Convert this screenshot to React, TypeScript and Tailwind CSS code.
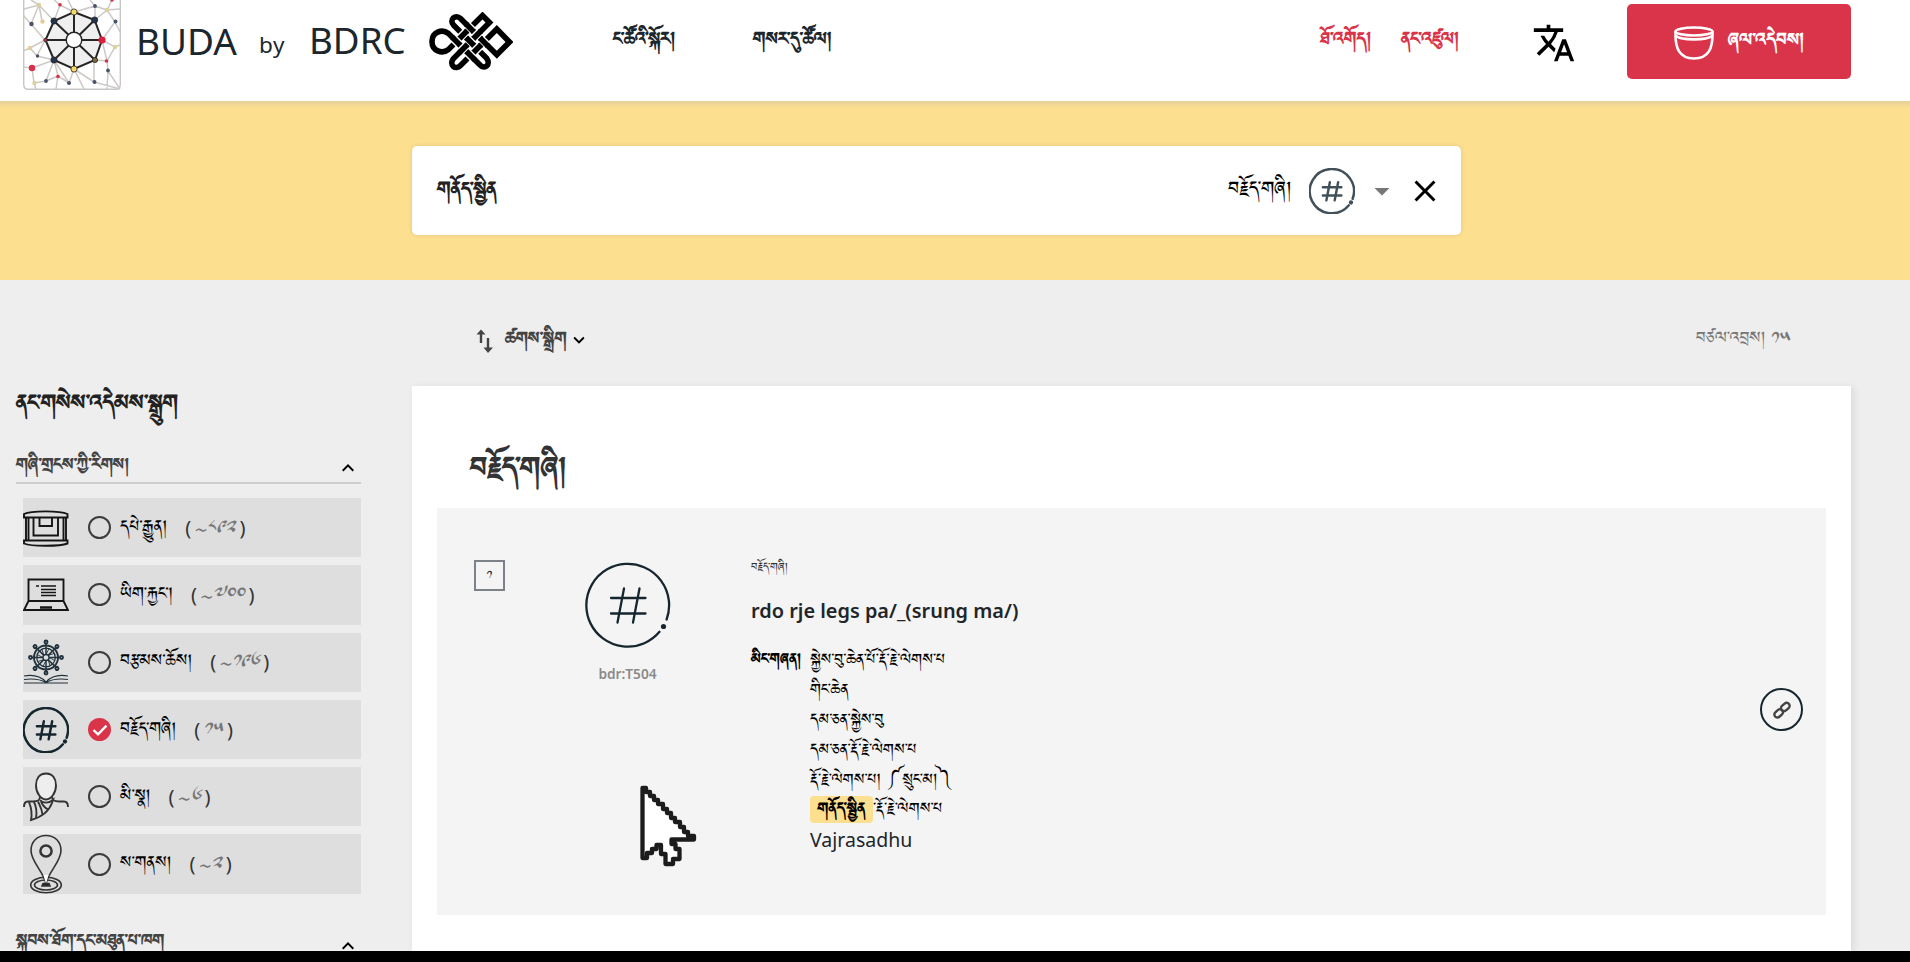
import React from "react";
import { MdTranslate, MdClose, MdExpandMore, MdExpandLess, MdArrowDropDown } from "react-icons/md";

const TIB = "[font-family:Jomolhari,serif] whitespace-nowrap";

function HashIcon({ className, stroke = 2 }: { className: string; stroke?: number }) {
  return (
    <svg viewBox="0 0 86 86" className={className} fill="none" stroke="currentColor" strokeLinecap="round">
      <path d="M81.6 57.5A41.4 41.4 0 1 0 74.5 69.8" strokeWidth={stroke} />
      <path d="M39 26.5L32.5 60.5M54.500 26.5L48 60.5M26 36H60.500M26 51.5H60.500" strokeWidth={stroke} />
      <circle cx="78.5" cy="64.5" r={stroke > 3 ? 4 : 2.6} fill="currentColor" stroke="none" />
    </svg>
  );
}

function Logo() {
  const rim = "74,12 94.6,20 102,40 95,60 74,69 54,60 45.5,40 54,21";
  return (
    <svg viewBox="23 0 98 91" className="h-[91px] w-[98px] shrink-0" fill="none">
      <path d="M23.7 -4V84Q23.7 89.3 28 89.3H116Q120.3 89.3 120.3 84V-4" stroke="#c9c6c6" strokeWidth="1.4" />
      <g stroke="#cdc9c7" strokeWidth="1.5">
        <path d="M31 0L39 5L54 21M39 5L42 21M39 5L24 9M23 15L31 24L39 5M54 0L60 5L74 12L68 0M60 5L54 21M74 12L95 6L90 0M95 6V20L107 10L120 9M107 10L112 0M95 6L107 10L115 22L102 40M107 10L95 20M115 22L120 32M31 24L45 40L30 48L23 51M30 48L37 56L54 60M45 40L37 56M102 40L115 47L120 45M102 40L107 61L95 60M115 47L107 61L108 71L120 89M32 68L54 60L46 81L34 83L36 89M32 68L23 67M32 68L34 83M54 60L58 76L69 83L74 69L84 89M46 81L58 76L56 89M74 69L94 82V60M94 82L120 89M108 71L107 89M54 60L69 83" />
      </g>
      <g>
        <g fill="#dfcf9b"><circle cx="39" cy="5" r="2.2" /><circle cx="42.5" cy="21.5" r="2.2" /><circle cx="107" cy="10" r="2.2" /><circle cx="30" cy="48" r="2.2" /><circle cx="115" cy="47" r="2.2" /><circle cx="34.5" cy="83" r="2.2" /></g>
        <g fill="#47526b"><circle cx="31.5" cy="24" r="2.2" /><circle cx="95" cy="6" r="1.9" /><circle cx="115.5" cy="21.5" r="1.9" /><circle cx="37.5" cy="56" r="1.7" /><circle cx="46" cy="81" r="1.9" /><circle cx="69" cy="83" r="2" /><circle cx="94.5" cy="82" r="2" /><circle cx="108" cy="70.5" r="1.9" /></g>
        <g fill="#d7304b"><circle cx="60" cy="4.7" r="1.8" /><circle cx="112" cy="0" r="1.8" /><circle cx="32" cy="68" r="3.2" /><circle cx="58" cy="76.5" r="1.8" /><circle cx="106.5" cy="61" r="1.8" /></g>
      </g>
      <polygon points={rim} fill="#efefef" stroke="#272424" strokeWidth="2" />
      <path d="M74 12V69M45.5 40H102M54 21L95 60M94.6 20L54 60" stroke="#272424" strokeWidth="2" />
      <circle cx="74" cy="40" r="7.8" fill="#fff" stroke="#272424" strokeWidth="1.4" />
      <g stroke="#272424" strokeWidth=".8">
        <circle cx="74" cy="12" r="3.1" fill="#f5da62" /><circle cx="74" cy="69" r="3.1" fill="#f5da62" />
        <circle cx="94.6" cy="20" r="3.1" fill="#23344f" /><circle cx="54" cy="21" r="3.1" fill="#23344f" />
        <circle cx="54" cy="60" r="3.1" fill="#23344f" /><circle cx="95" cy="60" r="2.6" fill="#7a6a40" />
        <circle cx="45.5" cy="40" r="1.7" fill="#d7304b" />
      </g>
      <circle cx="102" cy="40" r="3.6" fill="#dc1f3e" />
    </svg>
  );
}

/* One closed strand; each lattice crossing redraws the strand that passes on top. */
const falling = [25, 11.5, -2];
const rising = [57, 71, 85];
function Knot() {
  return (
    <svg viewBox="0 0 84 59" className="h-[59px] w-[84px] shrink-0" fill="none" stroke="#000" strokeWidth="5.600">
      <path d="M27.500 29.500L19.500 21.500C13 16.500 3 20 3 29.500C3 39 13 42.500 19.500 37.500L53.500 3.500L60.500 10.500L24.500 46.500C19.500 53 26.500 58.500 31.500 53.500L67.800 17L80.500 30L67.800 42.800L31.500 6.500C26.500 1.500 19.500 8 24.700 13.300L57.700 46.300C62 52.500 56 58 51 53L27.500 29.500" />
      {falling.map((c, i) =>
        rising.map((s, j) => {
          const x = (s + c) / 2;
          const y = (s - c) / 2;
          const d = (i + j) % 2 === 0 ? 1 : -1;
          return (
            <g key={`${i}${j}`}>
              <path d={`M${x - 3} ${y - 3 * d}L${x + 3} ${y + 3 * d}`} stroke="#fff" strokeWidth="8.400" />
              <path d={`M${x - 4.2} ${y - 4.2 * d}L${x + 4.2} ${y + 4.2 * d}`} />
            </g>
          );
        }),
      )}
    </svg>
  );
}

function BowlIcon() {
  return (
    <svg viewBox="0 0 40 34" className="mt-[3px] h-[34px] w-[40px]" fill="none" stroke="#fff" strokeWidth="2.600">
      <ellipse cx="20" cy="5.5" rx="18.500" ry="4" />
      <path d="M1.500 5.500C1 22 5 32.500 20 32.500S39 22 38.500 5.500M2 10C7 14.500 33 14.500 38 10" />
    </svg>
  );
}

const svgBase = "h-[60px] w-[46px]";

function PechaIcon() {
  return (
    <svg viewBox="0 0 46 60" className={svgBase} fill="none" stroke="#151515" strokeWidth="1.900">
      <path d="M1 16C8 12.500 37 12.500 44.500 16V19.500H1ZM1 42.500H44.500V45.500C37 48.500 8 48.500 1 45.500ZM3 20V42M5.500 20V42M40.500 20V42M43 20V42M10.500 20V37.500H35V20M16.500 20V28H29V20" />
    </svg>
  );
}
function LaptopIcon() {
  return (
    <svg viewBox="0 0 46 60" className={svgBase} fill="none" stroke="#151515" strokeWidth="1.900">
      <path d="M5.500 36V14.500H40.500V36ZM5.500 36L1 45H45L40.500 36" />
      <path d="M17 42.500H29" strokeWidth="2.500" />
      <path d="M13 21H16M18 21H33M18 24.500H33M18 27.500H33M18 30.500H33" strokeWidth="1.400" />
    </svg>
  );
}
function WheelIcon() {
  const spokes = [0, 45, 90, 135, 180, 225, 270, 315];
  return (
    <svg viewBox="0 0 46 60" className={svgBase} fill="none" stroke="#22323c" strokeWidth="1.300">
      <circle cx="23" cy="25.500" r="12" strokeWidth="1.900" /><circle cx="23" cy="25.500" r="9.300" /><circle cx="23" cy="25.500" r="3" />
      {spokes.map((a) => (
        <g key={a} transform={`rotate(${a} 23 25.5)`}>
          <path d="M23 22.500V11" strokeWidth="1.500" /><circle cx="23" cy="10" r="1.500" strokeWidth="1.900" />
          <path d="M23 22.500L26 16.700" strokeWidth=".9" />
        </g>
      ))}
      <path d="M1 44C9 42.500 17 43.500 23 50C29 43.500 37 42.500 45 44M1 47.500C9 46.500 16 46.500 23 50.500C30 46.500 37 46.500 45 47.500M1 51H45" strokeWidth="1.100" />
    </svg>
  );
}
function PersonIcon() {
  return (
    <svg viewBox="0 0 46 60" className={svgBase} fill="none" stroke="#333" strokeWidth="1.900">
      <path d="M23 6.500C16 6.500 13 12 13 18.500C13 26 18 32.500 23 32.500S33 26 33 18.500C33 12 30 6.500 23 6.500Z" fill="#eee" />
      <path d="M17 29.500C17 34 14 34.500 10 34.500H5C2 34.500 1 36 1 40M29 29.500C29 34 32 34.500 36 34.500H41C44 34.500 45 36 45 40" />
      <path d="M17 33C20 36.500 26 36.500 30 33L29 36C26 44 19 50 8 53C9.500 46 8 40 6 35M11 35C14 41 14 45 13 51M15 34.500C17 39 19 42 19.500 47.500M18 34.500C20 39 22 41 25 42.500" />
    </svg>
  );
}
function PlaceIcon() {
  return (
    <svg viewBox="0 0 46 60" className={svgBase} fill="none" stroke="#333" strokeWidth="1.600">
      <ellipse cx="23" cy="51" rx="15.300" ry="7.800" /><ellipse cx="23" cy="51" rx="11.500" ry="5" />
      <path d="M23 50C21 38 8 28 8 16.500C8 8 14 1.500 23 1.500S38 8 38 16.500C38 28 25 38 23 50Z" fill="#dedede" />
      <path d="M23 50L20.500 41H25.500Z" fill="#fff" stroke="none" />
      <circle cx="23" cy="17" r="5.600" strokeWidth="2.500" />
      <path d="M20 49.500H26L27 52H19Z" fill="#222" />
    </svg>
  );
}

function Facet({ icon, label, count, approx = true, checked = false }: { icon: React.ReactNode; label: string; count: string; approx?: boolean; checked?: boolean }) {
  return (
    <li className="flex h-[59.3px] items-center bg-[#dedede]">
      <span className="flex w-[65px] shrink-0 items-center">{icon}</span>
      {checked ? (
        <span className="flex size-[23px] items-center justify-center rounded-full bg-[#d93449]">
          <svg viewBox="0 0 16 12" className="h-3 w-4" fill="none" stroke="#fff" strokeWidth="2.400"><path d="M1.500 6L6 10.300L14.500 1.600" /></svg>
        </span>
      ) : (
        <span className="size-[23px] rounded-full border-2 border-[#3c3c3c]" />
      )}
      <span className={`${TIB} ml-[9px] text-[20.9px] leading-[30px] text-black`}>{label}</span>
      <span className="ml-[18px] flex items-center text-[20px] leading-[30px] text-[#333]">
        <span>(</span>
        <span className={`${TIB} ml-[2px] mr-[5px] text-[20.9px] italic text-[#777]`}>{approx ? "~" : ""}{count}</span>
        <span>)</span>
      </span>
    </li>
  );
}

const names = [
  "སྐྱེས་བུ་ཆེན་པོ་རྡོ་རྗེ་ལེགས་པ",
  "གིང་ཆེན",
  "དམ་ཅན་སྐྱེས་བུ",
  "དམ་ཅན་རྡོ་རྗེ་ལེགས་པ",
  "རྡོ་རྗེ་ལེགས་པ། ༼སྲུང་མ།༽",
];

export default function App() {
  return (
    <div className="flex h-[962px] w-[1910px] flex-col overflow-hidden bg-[#eee] font-['Noto_Sans',sans-serif] text-[#212529]">
      <header className="flex h-[101px] shrink-0 items-start bg-white pl-[23px] text-[#1c262d]">
        <Logo />
        <div className="flex h-[83px] items-center">
          <span className="-mt-[2px] ml-[15px] w-[123px] text-[37px]">BUDA</span>
          <span className="w-[50px] pt-[7px] text-[22.500px] tracking-wide">by</span>
          <span className="-mt-[2px] w-[120px] text-[36.700px]">BDRC</span>
          <Knot />
        </div>
        <nav className={`${TIB} flex h-[80px] items-center text-[22.400px] leading-[30px]`}>
          <a className="ml-[100px] w-[140px] font-bold">ང་ཚོའི་སྐོར།</a>
          <a className="w-[567px] font-bold">གསར་དུ་ཚོལ།</a>
          <a className="w-[81px] font-bold text-[#d93449]">ཐོ་འགོད།</a>
          <a className="w-[131px] font-bold text-[#d93449]">ནང་འཛུལ།</a>
        </nav>
        <MdTranslate className="mt-[21px] size-[44px] shrink-0 text-black" />
        <button className="ml-[51px] mt-[4px] flex h-[75px] w-[224px] shrink-0 items-center rounded-[5px] bg-[#d93449] pl-[47px] text-white">
          <BowlIcon />
          <span className={`${TIB} -mt-[2px] ml-[14px] text-[22.600px] font-bold leading-[30px]`}>ཞལ་འདེབས།</span>
        </button>
      </header>

      <section className="h-[179px] shrink-0 bg-[#fcdf8f]">
        <div className="h-[7px] bg-linear-to-b from-[#e6d09a] to-[#fcdf8f]" />
        <div className="ml-[412px] mt-[38px] flex h-[89px] w-[1049px] items-center rounded-[5px] bg-white pl-[25px] shadow-[0_0_5px_rgba(0,0,0,0.1)]">
          <span className={`${TIB} -mt-[2px] w-[791px] text-[24.200px] font-bold leading-[30px] text-[#222]`}>གནོད་སྦྱིན</span>
          <span className={`${TIB} -mt-[4px] w-[81px] text-[23.600px] leading-[30px] text-black`}>བརྗོད་གཞི།</span>
          <HashIcon className="size-[46px] shrink-0 text-[#42505a]" stroke={4.6} />
          <MdArrowDropDown className="ml-[9px] size-[36px] shrink-0 text-[#777]" />
          <MdClose className="ml-[7px] size-[36px] shrink-0 text-black" />
        </div>
      </section>

      <main className="flex min-h-0 flex-1">
        <aside className="w-[412px] shrink-0 pl-[16px] pt-[104px]">
          <h2 className={`${TIB} text-[27px] font-bold leading-[40px] text-[#222]`}>ནང་གསེས་འདེམས་སྒྲུག</h2>
          <div className="mt-[15px] flex h-[45px] w-[345px] items-start justify-between border-b-2 border-[#ccc] pr-[1px] pt-[11px]">
            <h3 className={`${TIB} text-[21px] font-bold leading-[30px] text-[#444]`}>གཞི་གྲངས་ཀྱི་རིགས།</h3>
            <MdExpandLess className="mt-[6px] size-[24px] text-black" />
          </div>
          <ul className="ml-[7px] mt-[14px] flex w-[338px] flex-col gap-[8px]">
            <Facet icon={<PechaIcon />} label="དཔེ་རྒྱུན།" count="༨༩༢" />
            <Facet icon={<LaptopIcon />} label="ཡིག་རྐྱང་།" count="༧༠༠" />
            <Facet icon={<WheelIcon />} label="བརྩམས་ཆོས།" count="༡༩༦" />
            <Facet icon={<HashIcon className="size-[46px] text-[#16262f]" stroke={4.6} />} label="བརྗོད་གཞི།" count="༡༥" approx={false} checked />
            <Facet icon={<PersonIcon />} label="མི་སྣ།" count="༦" />
            <Facet icon={<PlaceIcon />} label="ས་གནས།" count="༢" />
          </ul>
          <div className="mt-[30px] flex w-[345px] items-center justify-between pr-[1px]">
            <h3 className={`${TIB} text-[21px] font-bold leading-[30px] text-[#444]`}>སྐབས་ཐོག་དང་མཐུན་པ་ཁག</h3>
            <MdExpandLess className="mt-[10px] size-[24px] text-black" />
          </div>
        </aside>

        <div className="flex w-[1439px] shrink-0 flex-col">
          <div className="flex h-[106px] shrink-0 items-center pl-[64px] pt-[12px]">
            <svg viewBox="0 0 20 26" className="mt-[4px] h-[26px] w-[20px]" fill="#444"><path d="M5 1.500L9.500 6.500H6.200V15H3.800V6.500H.5ZM10.800 10H13.200V19.500H17L12 25L7.500 19.500H10.800Z" /></svg>
            <span className={`${TIB} ml-[9px] text-[21.400px] font-bold leading-[30px] text-[#444]`}>ཚགས་སྒྲིག</span>
            <MdExpandMore className="ml-[1px] mt-[2px] size-[22px] text-black" />
            <span className={`${TIB} -mt-[1px] ml-auto mr-[60px] text-[20.700px] leading-[30px] text-[#777]`}>བཙལ་འབྲས། ༡༥</span>
          </div>
          <div className="flex-1 bg-white px-[25px] pt-[52px] shadow-[3px_1px_8px_rgba(0,0,0,0.08)]">
            <h1 className={`${TIB} h-[70px] pl-[33px] pt-[1px] text-[36px] font-bold leading-[60px] text-[#333]`}>བརྗོད་གཞི།</h1>
            <article className="flex h-[407px] bg-[#f4f4f4]">
              <div className="ml-[37px] mt-[52px] flex size-[31px] items-center justify-center border-2 border-[#7d8289]">
                <span className={`${TIB} -mt-[2px] text-[14px] leading-[20px] text-[#333]`}>༡</span>
              </div>
              <div className="ml-[59px] mt-[54px] flex w-[127px] flex-col items-center">
                <HashIcon className="size-[86px] text-[#16262f]" stroke={2.3} />
                <span className="mt-[16px] text-[13.700px] font-semibold leading-[20px] text-[#8a8a8a]">bdr:T504</span>
              </div>
              <div className="ml-[60px] mt-[44px] flex-1">
                <div className={`${TIB} text-[13.700px] leading-[30px] text-[#333]`}>བརྗོད་གཞི།</div>
                <div className="mt-[14px] text-[19.900px] font-semibold leading-[30px]">rdo rje legs pa/_(srung ma/)</div>
                <div className="mt-[19px] flex text-black">
                  <div className={`${TIB} w-[59px] text-[18.200px] font-bold leading-[30px]`}>མིང་གཞན།</div>
                  <div className={`${TIB} text-[19.400px] leading-[30px]`}>
                    {names.map((n) => <div key={n}>{n}</div>)}
                    <div className="flex items-center">
                      <mark className="-mt-[1px] flex h-[27px] w-[63px] items-center justify-center rounded-[4px] bg-[#fcdf8f] font-bold text-black">གནོད་སྦྱིན</mark>
                      <span className="-mt-[1px]">་རྡོ་རྗེ་ལེགས་པ</span>
                    </div>
                    <div className="mt-[1px] font-['Noto_Sans',sans-serif] text-[19.500px] leading-[30px] text-[#212529]">Vajrasadhu</div>
                  </div>
                </div>
              </div>
              <div className="mr-[23px] mt-[180px] flex size-[43px] items-center justify-center rounded-full border-2 border-[#16262f]">
                <svg viewBox="0 0 20 20" className="size-[20px]" fill="none" stroke="#444" strokeWidth="2.400"><rect x="-4.800" y="-3" width="9.600" height="6" rx="3" transform="translate(6.700 13.300) rotate(-42)" /><rect x="-4.800" y="-3" width="9.600" height="6" rx="3" transform="translate(13.300 7) rotate(-42)" /></svg>
              </div>
            </article>
          </div>
        </div>
      </main>
      <div className="relative h-[11px] shrink-0 bg-black" />
      <svg viewBox="0 0 64 88" className="absolute left-[637px] top-[782px] h-[88px] w-[64px]">
        <path d="M5.500 6H9V10H13V14H17V18H21V22H26V27H30V31H34V36H38V40H43V45H47V50H51V54H57V57.500H34.500V62H38.500V67H42.500V77H36V82H28.500V72H24V63H19.500V67H15V71H10V76H5.500Z" fill="#fff" stroke="#1c1c1c" strokeWidth="4.300" strokeLinejoin="round" />
      </svg>
    </div>
  );
}
